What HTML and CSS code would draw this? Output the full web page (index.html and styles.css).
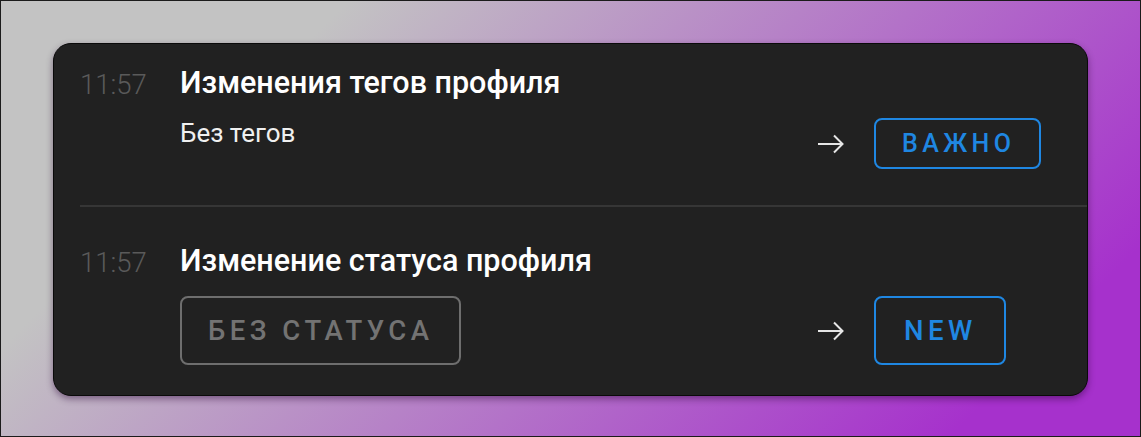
FILE: index.html
```html
<!DOCTYPE html>
<html lang="ru">
<head>
<meta charset="utf-8">
<link rel="stylesheet" href="styles.css">
</head>
<body>
<div class="frame">
  <div class="card">
    <div class="row row-first">
      <div class="time">11:57</div>
      <div class="content">
        <div class="title">Изменения тегов профиля</div>
        <div class="line">
          <div class="sub">Без тегов</div>
          <div class="right">
            <svg class="arrow" width="26" height="22" viewBox="0 0 26 22"><path d="M0 11H24.5M16 2.5L24.5 11L16 19.5" fill="none" stroke="#e6e6e6" stroke-width="2"/></svg>
            <div class="badge-col"><span class="badge badge-blue badge-short">ВАЖНО</span></div>
          </div>
        </div>
      </div>
    </div>
    <div class="divider"></div>
    <div class="row row-second">
      <div class="time">11:57</div>
      <div class="content">
        <div class="title">Изменение статуса профиля</div>
        <div class="line line-center">
          <span class="badge badge-gray">БЕЗ СТАТУСА</span>
          <div class="right">
            <svg class="arrow" width="26" height="22" viewBox="0 0 26 22"><path d="M0 11H24.5M16 2.5L24.5 11L16 19.5" fill="none" stroke="#e6e6e6" stroke-width="2"/></svg>
            <div class="badge-col"><span class="badge badge-blue badge-new">NEW</span></div>
          </div>
        </div>
      </div>
    </div>
  </div>
</div>
</body>
</html>
```

FILE: styles.css
```css
html, body {
  margin: 0;
  padding: 0;
}
.frame {
  width: 1141px;
  height: 437px;
  box-sizing: border-box;
  border: 1px solid #1b1b1b;
  background: linear-gradient(135deg, #c3c3c3 22%, #a631cc 88%);
  padding: 42px 52px 0 52px;
  font-family: Roboto, "Noto Sans", sans-serif;
}
.card {
  box-sizing: border-box;
  width: 1035px;
  height: 353px;
  background: #212121;
  border: 1px solid #0a0a0a;
  border-radius: 18px;
  box-shadow: 0 3px 7px rgba(40, 0, 50, 0.45);
  padding-left: 26px;
}
.row {
  display: flex;
}
.row-first {
  padding: 21px 0 36px 0;
}
.row-second {
  padding: 36px 0 0 0;
}
.time {
  width: 100px;
  flex: none;
  font-size: 27.5px;
  font-weight: 300;
  line-height: 40px;
  color: #5a5a5a;
}
.content {
  flex: 1;
  display: flex;
  flex-direction: column;
}
.title {
  font-size: 30.5px;
  font-weight: 500;
  line-height: 36px;
  color: #ffffff;
}
.line {
  display: flex;
  justify-content: space-between;
  align-items: flex-start;
  margin-top: 16px;
}
.line-center {
  align-items: center;
  margin-top: 17px;
}
.sub {
  font-size: 26px;
  line-height: 32px;
  color: #f0f0f0;
}
.right {
  display: flex;
  align-items: center;
  gap: 30px;
}
.row-first .right {
  margin-top: 1px;
}
.arrow {
  display: block;
}
.badge-col {
  width: 213px;
  display: flex;
}
.badge {
  box-sizing: border-box;
  display: inline-flex;
  align-items: center;
  justify-content: center;
  border: 2px solid;
  border-radius: 8px;
  font-size: 27.5px;
  font-weight: 500;
  letter-spacing: 4.5px;
  padding: 0 26px 0 26px;
  height: 69px;
}
.badge-short {
  height: 51px;
  font-size: 25px;
  letter-spacing: 4.4px;
  padding: 0 24px 0 26px;
}
.badge-new {
  padding: 0 27px 0 28px;
}
.badge-blue {
  color: #1f87e2;
  border-color: #1f87e2;
}
.badge-gray {
  color: #737373;
  border-color: #6e6e6e;
}
.divider {
  height: 2px;
  background: #363636;
}
```
